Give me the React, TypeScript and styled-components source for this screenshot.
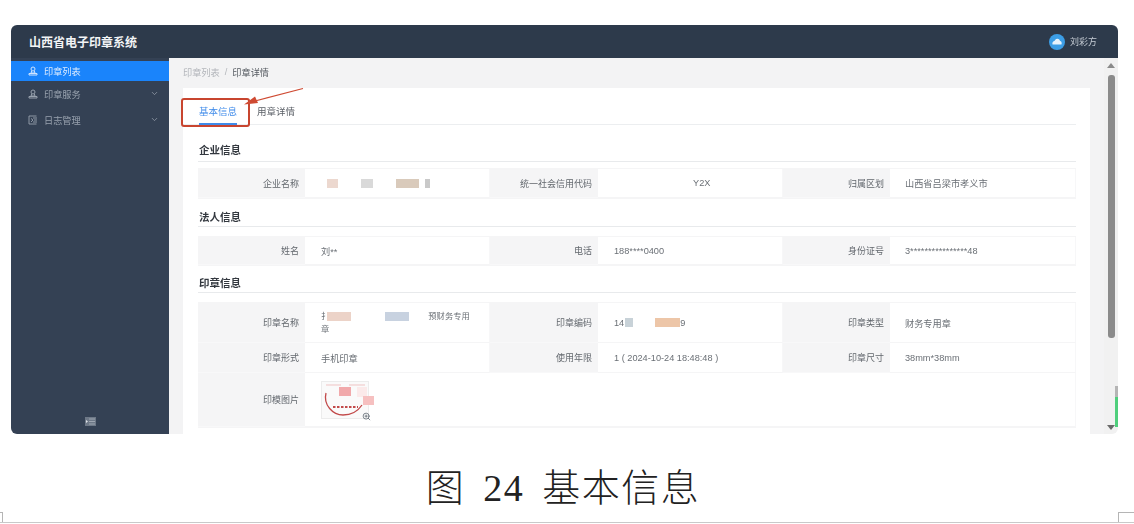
import React from "react";
import styled, { createGlobalStyle } from "styled-components";
import { ChevronDown, ZoomIn } from "lucide-react";

const GlobalStyle = createGlobalStyle`
  html, body {
    margin: 0;
    background: #fff;
    font-family: "Liberation Sans", "Noto Sans CJK SC", sans-serif;
  }
`;

const Page = styled.div`
  width: 1134px;
  height: 524px;
  position: relative;
  display: flex;
  flex-direction: column;
  padding: 25px 16px 0 11px;
  box-sizing: border-box;
  overflow: hidden;
`;

const Shot = styled.div`
  position: relative;
  flex: none;
  width: 1107px;
  height: 409px;
  display: flex;
  flex-direction: column;
  border-radius: 6px;
  overflow: hidden;
  filter: blur(0.6px);
`;

const Header = styled.header`
  flex: none;
  height: 33px;
  background: #2d3a4b;
  display: flex;
  align-items: center;
  justify-content: space-between;
  padding: 0 21px 0 18px;
`;

const Brand = styled.div`
  color: #f2f4f6;
  font-size: 12px;
  font-weight: 700;
`;

const UserBox = styled.div`
  display: flex;
  align-items: center;
  gap: 5px;
  color: #c5ccd4;
  font-size: 9px;
`;

const Body = styled.div`
  flex: 1;
  min-height: 0;
  display: flex;
`;

const Sidebar = styled.aside`
  flex: none;
  width: 158px;
  padding-top: 3px;
  background: #344154;
  display: flex;
  flex-direction: column;
`;

const MenuItem = styled.div<{ $active?: boolean }>`
  height: ${(p) => (p.$active ? 20 : 26)}px;
  box-sizing: border-box;
  padding: 0 10px 1px 17px;
  display: flex;
  align-items: center;
  gap: 6px;
  font-size: 9.2px;
  color: ${(p) => (p.$active ? "#dcebff" : "#98a2ae")};
  background: ${(p) => (p.$active ? "#1a84fb" : "transparent")};
`;

const MenuText = styled.span`
  flex: 1;
`;

const Collapse = styled.div`
  margin-top: auto;
  height: 17px;
  display: flex;
  justify-content: center;
`;

const Main = styled.main`
  flex: 1;
  min-width: 0;
  background: #f3f3f4;
  display: flex;
  overflow: hidden;
`;

const Content = styled.div`
  flex: 1;
  min-width: 0;
  padding: 0 14px;
`;

const Crumbs = styled.div`
  height: 28px;
  padding-bottom: 2px;
  display: flex;
  align-items: center;
  gap: 5px;
  font-size: 9.2px;
  color: #b2b5ba;
`;

const CrumbNow = styled.span`
  color: #555a60;
`;

const Card = styled.div`
  background: #fff;
  padding: 0 14px 0 15px;
  height: 400px;
`;

const Tabs = styled.div`
  height: 36px;
  display: flex;
  align-items: flex-end;
  gap: 20px;
  margin-left: -15px;
  padding-left: 16px;
  border-bottom: 1px solid #eceef0;
`;

const Tab = styled.div<{ $active?: boolean }>`
  height: 19px;
  font-size: 9.5px;
  line-height: 12px;
  box-sizing: border-box;
  color: ${(p) => (p.$active ? "#3f8bea" : "#5a5f66")};
  border-bottom: 2px solid ${(p) => (p.$active ? "#3f8bea" : "transparent")};
  margin-bottom: -1px;
`;

const SectionTitle = styled.div<{ $height: number; $gap: number; $lift: number }>`
  height: ${(p) => p.$height}px;
  box-sizing: border-box;
  display: flex;
  align-items: flex-end;
  padding: 0 0 ${(p) => p.$lift}px 1px;
  font-size: 10.5px;
  font-weight: 700;
  color: #33383f;
  border-bottom: 1px solid #e8eaec;
  margin-bottom: ${(p) => p.$gap}px;
`;

const InfoGrid = styled.div<{ $rows: string }>`
  display: grid;
  grid-template-columns: 107px 185px 108px 185px 107px 186px;
  grid-template-rows: ${(p) => p.$rows};
  border: 1px solid #f5f5f6;
  border-left: 0;
  border-right: 0;
  font-size: 9.2px;
`;

const Label = styled.div`
  background: #f5f5f6;
  color: #62676d;
  display: flex;
  align-items: center;
  justify-content: flex-end;
  padding-right: 6px;
  font-size: 9px;
  border-bottom: 1px solid #f8f8f9;
`;

const Value = styled.div<{ $pad?: number; $span?: number }>`
  color: #6a6f75;
  padding-left: ${(p) => p.$pad ?? 16}px;
  display: flex;
  align-items: center;
  white-space: nowrap;
  grid-column: span ${(p) => p.$span ?? 1};
  border-bottom: 1px solid #f5f5f6;
  border-right: 1px solid #f7f7f8;
`;

const NameLines = styled.div`
  line-height: 13px;
  font-size: 8.3px;
`;

const Blot = styled.span<{ $w: number; $gap: number; $color: string }>`
  display: inline-block;
  width: ${(p) => p.$w}px;
  height: 9px;
  margin-left: ${(p) => p.$gap}px;
  background: ${(p) => p.$color};
  vertical-align: middle;
`;

const StampWrap = styled.div`
  position: relative;
  width: 55px;
  height: 38px;
  display: flex;
`;

const ZoomMark = styled.div`
  position: absolute;
  right: 5px;
  bottom: -2px;
  color: #56606a;
  display: flex;
`;

const Scrollbar = styled.div`
  flex: none;
  width: 14px;
  position: relative;
  background: #f1f1f1;
`;

const ScrollThumb = styled.div`
  position: absolute;
  left: 4px;
  top: 17px;
  width: 7px;
  height: 263px;
  border-radius: 3px;
  background: #8b8b8b;
`;

const ScrollArrow = styled.div<{ $down?: boolean }>`
  position: absolute;
  left: 3px;
  ${(p) => (p.$down ? "bottom: 4px;" : "top: 5px;")}
  border-left: 4.5px solid transparent;
  border-right: 4.5px solid transparent;
  ${(p) => (p.$down ? "border-top: 5px solid #6a6a6a;" : "border-bottom: 5px solid #8a8a8a;")}
`;

const GreenMark = styled.div`
  position: absolute;
  right: 0;
  top: 328px;
  width: 3px;
  height: 41px;
  background: linear-gradient(#b5b5b5 0 11px, #4fcf7c 11px);
`;

const Callout = styled.div`
  position: absolute;
  left: 170px;
  top: 73px;
  width: 69px;
  height: 29px;
  box-sizing: border-box;
  border: 2px solid #c8452f;
  border-radius: 3px;
`;

const CalloutArrow = styled.svg`
  position: absolute;
  left: 232px;
  top: 62px;
`;

const Caption = styled.div`
  flex: none;
  margin-top: 30px;
  padding-right: 3px;
  text-align: center;
  font-size: 38px;
  line-height: 48px;
  font-weight: 300;
  letter-spacing: 1.5px;
  word-spacing: 7px;
  color: #222;
  font-family: "Liberation Serif", "Noto Sans CJK SC", serif;
`;

const Ruler = styled.div`
  position: absolute;
  left: 0;
  right: 0;
  bottom: 1px;
  height: 1px;
  background: #c9c9c9;
`;

const Corner = styled.div<{ $right?: boolean }>`
  position: absolute;
  bottom: 2px;
  width: ${(p) => (p.$right ? 16 : 3)}px;
  height: 10px;
  box-sizing: border-box;
  border-top: 1px solid #b5b5b5;
  ${(p) =>
    p.$right
      ? "left: 1118px; border-left: 1px solid #b5b5b5;"
      : "left: 0; border-right: 1px solid #b5b5b5;"}
`;

const SealIcon = ({ color }: { color: string }) => (
  <svg width="10" height="10" viewBox="0 0 10 10" fill="none" stroke={color} strokeWidth="1">
    <circle cx="5" cy="3" r="2" />
    <path d="M3.6 5 3 7H7L6.4 5M1 7.5H9V9H1Z" />
  </svg>
);

const LogIcon = () => (
  <svg width="10" height="10" viewBox="0 0 10 10" fill="none" stroke="#98a2ae" strokeWidth="0.9">
    <path d="M8.5 1H1V9H8.5M3 3.5 5 5 3 7M5 3h4M6 5h3M5 7h4" />
  </svg>
);

const Avatar = () => (
  <svg width="16" height="16" viewBox="0 0 16 16">
    <circle cx="8" cy="8" r="8" fill="#3c9ee6" />
    <path d="M3.5 10.5c-.6-2 .8-3.4 2-3.4C6 5.500 7 4.600 8.400 4.700c1.500.1 2.500 1.200 2.600 2.400 1.300.1 2.100 1.700 1.500 3.400Z" fill="#e6f3fc" />
  </svg>
);

const CollapseIcon = () => (
  <svg width="11" height="9" viewBox="0 0 11 9">
    <rect width="11" height="9" fill="#6d7887" />
    <path d="M4 2h6M4 4.500h6M4 7h6" stroke="#a9b1bb" strokeWidth="0.8" />
    <path d="M1 3v3l2-1.500Z" fill="#dfe3e8" />
  </svg>
);

const StampPicture = () => (
  <svg width="55" height="38" viewBox="0 0 55 38">
    <rect x="0.500" y="0.500" width="47" height="37" fill="#fafafa" stroke="#ececec" />
    <path d="M5 4h15M28 4h16" stroke="#efc3c3" strokeWidth="1" />
    <rect x="18" y="6" width="12" height="9" fill="#f1a9ab" />
    <rect x="36" y="6" width="10" height="10" fill="#fbeaea" />
    <rect x="42" y="15" width="11" height="9" fill="#f6c0c0" />
    <path d="M5 12c-3 12 7 22 17 22 8 0 15-4 19-10" fill="none" stroke="#c24a4a" strokeWidth="1.300" />
    <path d="M12 26h25" stroke="#c24a4a" strokeWidth="2" strokeDasharray="2.500 1.500" />
  </svg>
);

const App = () => (
  <>
    <GlobalStyle />
    <Page>
      <Shot>
        <Header>
          <Brand>山西省电子印章系统</Brand>
          <UserBox>
            <Avatar />
            <span>刘彩方</span>
          </UserBox>
        </Header>
        <Body>
          <Sidebar>
            <MenuItem $active>
              <SealIcon color="#cfe4ff" />
              <MenuText>印章列表</MenuText>
            </MenuItem>
            <MenuItem>
              <SealIcon color="#98a2ae" />
              <MenuText>印章服务</MenuText>
              <ChevronDown size={9} />
            </MenuItem>
            <MenuItem>
              <LogIcon />
              <MenuText>日志管理</MenuText>
              <ChevronDown size={9} />
            </MenuItem>
            <Collapse>
              <CollapseIcon />
            </Collapse>
          </Sidebar>
          <Main>
            <Content>
              <Crumbs>
                <span>印章列表</span>
                <span>/</span>
                <CrumbNow>印章详情</CrumbNow>
              </Crumbs>
              <Card>
                <Tabs>
                  <Tab $active>基本信息</Tab>
                  <Tab>用章详情</Tab>
                </Tabs>
                <SectionTitle $height={37} $gap={6} $lift={4}>企业信息</SectionTitle>
                <InfoGrid $rows="29px">
                  <Label>企业名称</Label>
                  <Value $pad={22}>
                    <Blot $w={11} $gap={0} $color="#ecd8cf" />
                    <Blot $w={12} $gap={23} $color="#d9d9d9" />
                    <Blot $w={23} $gap={23} $color="#d9cabb" />
                    <Blot $w={5} $gap={6} $color="#c9c9c9" />
                  </Value>
                  <Label>统一社会信用代码</Label>
                  <Value $pad={95}>Y2X</Value>
                  <Label>归属区划</Label>
                  <Value $pad={15}>山西省吕梁市孝义市</Value>
                </InfoGrid>
                <SectionTitle $height={28} $gap={9} $lift={2}>法人信息</SectionTitle>
                <InfoGrid $rows="28px">
                  <Label>姓名</Label>
                  <Value>刘**</Value>
                  <Label>电话</Label>
                  <Value>188****0400</Value>
                  <Label>身份证号</Label>
                  <Value $pad={15}>3****************48</Value>
                </InfoGrid>
                <SectionTitle $height={27} $gap={9} $lift={2}>印章信息</SectionTitle>
                <InfoGrid $rows="40px 30px 54px">
                  <Label>印章名称</Label>
                  <Value>
                    <NameLines>
                      扌
                      <Blot $w={24} $gap={-2} $color="#ecd3c8" />
                      <Blot $w={24} $gap={34} $color="#c8d2e0" />
                      <Blot $w={0} $gap={19} $color="transparent" />
                      预财务专用
                      <br />章
                    </NameLines>
                  </Value>
                  <Label>印章编码</Label>
                  <Value>
                    <span>14</span>
                    <Blot $w={8} $gap={1} $color="#c8d2d8" />
                    <Blot $w={25} $gap={22} $color="#edc6a8" />
                    <span>9</span>
                  </Value>
                  <Label>印章类型</Label>
                  <Value $pad={15}>财务专用章</Value>
                  <Label>印章形式</Label>
                  <Value>手机印章</Value>
                  <Label>使用年限</Label>
                  <Value>1 ( 2024-10-24 18:48:48 )</Value>
                  <Label>印章尺寸</Label>
                  <Value $pad={15}>38mm*38mm</Value>
                  <Label>印模图片</Label>
                  <Value $span={5}>
                    <StampWrap>
                      <StampPicture />
                      <ZoomMark>
                        <ZoomIn size={9} />
                      </ZoomMark>
                    </StampWrap>
                  </Value>
                </InfoGrid>
              </Card>
            </Content>
            <Scrollbar>
              <ScrollArrow />
              <ScrollThumb />
              <GreenMark />
              <ScrollArrow $down />
            </Scrollbar>
          </Main>
        </Body>
        <Callout />
        <CalloutArrow width="62" height="20" viewBox="0 0 62 20">
          <path d="M60 1.500 12 14" stroke="#cf4a32" strokeWidth="1.200" fill="none" />
          <path d="M1 17.500 12 9.500 15 16Z" fill="#cf4a32" />
        </CalloutArrow>
      </Shot>
      <Caption>图 24 基本信息</Caption>
      <Corner />
      <Corner $right />
      <Ruler />
    </Page>
  </>
);

export default App;
